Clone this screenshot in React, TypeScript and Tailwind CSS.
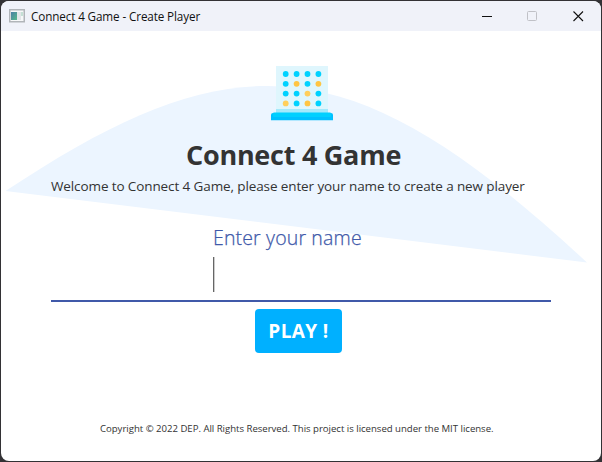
const BLUE = '#00d2ff';
const AMBER = '#ffc543';
const discs = [
  [BLUE, BLUE, BLUE, BLUE],
  [BLUE, AMBER, BLUE, AMBER],
  [BLUE, BLUE, '#ffcf5c', BLUE],
  ['#ffcf5c', BLUE, AMBER, BLUE],
];

function AppIcon() {
  return (
    <svg width="16" height="14" viewBox="0 0 16 14" className="shrink-0">
      <defs>
        <linearGradient id="pane" x1="0" y1="0" x2="1" y2="1">
          <stop offset="0" stopColor="#4a7fa5" />
          <stop offset="1" stopColor="#57b98a" />
        </linearGradient>
      </defs>
      <rect x="0.75" y="0.75" width="14.5" height="12" fill="#f7f8f9" stroke="#b1b5b9" strokeWidth="1.5" />
      <rect x="2" y="3" width="6" height="8" fill="url(#pane)" />
      <rect x="8" y="3" width="4" height="8" fill="#e2e6e8" />
      <rect x="12" y="3" width="2" height="4" fill="#c5e0d5" />
    </svg>
  );
}

function BoardLogo() {
  return (
    <svg width="62" height="55" viewBox="0 0 62 55" className="shrink-0">
      <rect x="5" y="0" width="52" height="43" fill="#dff6fd" />
      <rect x="5" y="43" width="52" height="4" fill="#a5e9fb" />
      {discs.map((row, r) =>
        row.map((fill, c) => (
          <circle key={`${r}-${c}`} cx={14.7 + c * 10.9} cy={8 + r * 9.8} r="2.9" fill={fill} />
        )),
      )}
      <path d="M0 54.3V49q0-2 2-2h58q2 0 2 2v5.3Z" fill="#00c0ff" />
      <rect x="2" y="46.5" width="58" height="4.5" rx="1" fill="#00d0ff" />
    </svg>
  );
}

export default function App() {
  return (
    <div className="h-[462px] w-[602px] overflow-hidden bg-[#333235] p-px font-['Open_Sans','Noto_Sans',sans-serif]">
      <div className="relative isolate flex h-[460px] w-[600px] flex-col overflow-hidden rounded-[8px] bg-white">
        <header className="flex h-[30px] shrink-0 items-center bg-[#f0f2f9] pl-2">
          <AppIcon />
          <span className="ml-[6px] text-[11.7px] leading-[16px] tracking-[-0.12px] whitespace-nowrap text-[#111]">
            Connect 4 Game - Create Player
          </span>
          <svg width="102" height="12" viewBox="0 0 102 12" className="mr-[17px] ml-auto" fill="none">
            <path d="M0 6.5h10" stroke="#111" />
            <rect x="45.5" y="1.5" width="9" height="9" rx="1" stroke="#c0c1c7" />
            <path d="M91.5 1.5l9.5 9.5M101 1.5l-9.5 9.5" stroke="#111" strokeWidth="1.1" />
          </svg>
        </header>
        <svg width="600" height="430" viewBox="1 31 600 430" className="absolute top-[30px] left-0 -z-10">
          <path d="M5.5 191C238.5 36 354 46.5 587 262.5Z" fill="#ecf5ff" />
        </svg>
        <main className="flex flex-1 flex-col pt-[35px]">
          <div className="flex pl-[270px]">
            <BoardLogo />
          </div>
          <h1 className="mt-[15px] ml-[185px] text-[27px] leading-[38px] font-bold tracking-[-0.26px] whitespace-nowrap text-[#333]">
            Connect 4 Game
          </h1>
          <p className="mt-[2px] ml-[50px] text-[13.5px] leading-[20px] tracking-[-0.11px] whitespace-nowrap text-[#333]">
            Welcome to Connect 4 Game, please enter your name to create a new player
          </p>
          <div className="mx-[50px] mt-[30px] flex h-[76px] flex-col border-b-2 border-[#4059a9] pl-[162px]">
            <label className="-mt-px text-[19.5px] leading-[26px] font-light tracking-[0.15px] whitespace-nowrap text-[#4059a9] [-webkit-text-stroke:0.25px_#4059a9]">
              Enter your name
            </label>
            <div className="mt-[6px] h-[35px] w-[2px] border-l border-[#666] bg-[#ccc]" />
          </div>
          <button className="mt-[7px] ml-[254px] flex h-[44px] w-[87px] items-center justify-center rounded-[4px] bg-[#00b0ff] text-[19px] font-bold tracking-[0.4px] whitespace-nowrap text-white">
            PLAY !
          </button>
          <footer className="mt-auto mb-[25px] ml-[99px] text-[9.6px] leading-[14px] tracking-[-0.02px] whitespace-nowrap text-[#333]">
            Copyright © 2022 DEP. All Rights Reserved. This project is licensed under the MIT license.
          </footer>
        </main>
      </div>
    </div>
  );
}
